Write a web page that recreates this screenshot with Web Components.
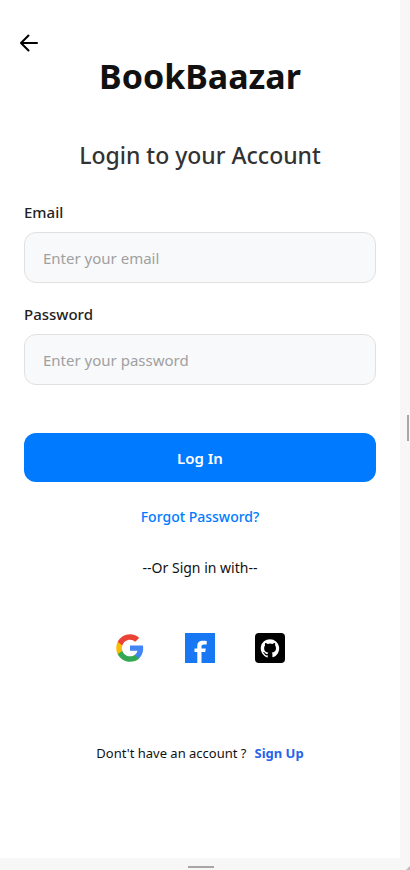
<!DOCTYPE html>
<html lang="en">
<head>
<meta charset="utf-8">
<meta name="viewport" content="width=device-width, initial-scale=1">
<title>BookBaazar - Login</title>
<style>
  body { margin: 0; background: #f7f7f7; color: #111; font-family: "Segoe UI", "Noto Sans", "Open Sans", sans-serif; }
</style>
</head>
<body>
<device-frame>
  <login-screen></login-screen>
</device-frame>
<script>
  class BaseElement extends HTMLElement {
    constructor() {
      super();
      this.attachShadow({ mode: 'open' }).innerHTML = this.render();
    }
  }

  customElements.define('device-frame', class extends BaseElement {
    render() {
      return `<style>
        :host { display: grid; grid-template: 1fr 12px / 1fr 10px; min-height: 100vh; background: #f7f7f7; }
        .screen { background: #fff; min-width: 0; }
        .bar { display: flex; align-items: center; justify-content: center; }
        .right { justify-content: end; padding: 0 1px 2px 0; }
        .bottom { align-items: end; padding: 0 0 2px 2px; }
        .bar i { background: #aaa6a6; }
        .right i { width: 2px; height: 26px; }
        .bottom i { width: 26px; height: 2px; }
        svg { align-self: end; justify-self: end; display: block; }
      </style>
      <main class="screen"><slot></slot></main>
      <div class="bar right"><i></i></div>
      <div class="bar bottom"><i></i></div>
      <svg width="4" height="4" viewBox="0 0 4 4"><path d="M0 4 4 0V4Z" fill="#bbb"/></svg>`;
    }
  });

  customElements.define('back-button', class extends BaseElement {
    render() {
      return `<style>
        :host { display: block; }
        button { display: block; width: 24px; height: 24px; padding: 0; border: 0; background: none; color: #000; cursor: pointer; }
        svg { display: block; }
      </style>
      <button type="button" aria-label="Back"><svg width="24" height="24" viewBox="0 0 24 24" fill="none" stroke="currentColor" stroke-width="2" stroke-linecap="round" stroke-linejoin="round"><path d="M20 12H4M11.500 4.500 4 12l7.500 7.500"/></svg></button>`;
    }
  });

  customElements.define('text-field', class extends BaseElement {
    render() {
      const type = this.getAttribute('type');
      return `<style>
        :host { display: grid; gap: 10px; }
        label { font-size: 15px; line-height: 20px; font-weight: 500; color: #222; }
        input { box-sizing: border-box; width: 100%; height: 51px; margin: 0; padding: 0 18px; border: 1px solid #e0e0e0; border-radius: 12px; background: #f8f9fb; color: #333; font: inherit; font-size: 15px; outline: none; }
        input::placeholder { color: #a0a0a0; opacity: 1; }
      </style>
      <label for="field">${this.getAttribute('label')}</label>
      <input id="field" type="${type}" placeholder="${this.getAttribute('placeholder')}">`;
    }
  });

  customElements.define('primary-button', class extends BaseElement {
    render() {
      return `<style>
        :host { display: block; }
        button { display: block; width: 100%; height: 49px; padding: 0; border: 0; border-radius: 12px; background: #007bff; color: #fff; font: inherit; font-size: 15px; font-weight: 600; cursor: pointer; }
      </style>
      <button type="submit"><slot></slot></button>`;
    }
  });

  const logos = {
    Google: `<svg viewBox="0 0 48 48">
      <path fill="#4285f4" d="M45.100 24.500c0-1.600-.100-3.100-.400-4.500H24v8.500h11.900c-.500 2.700-2.100 5-4.400 6.600v5.500h7.100c4.100-3.800 6.500-9.400 6.500-16.100Z"/>
      <path fill="#34a853" d="M24 46c5.900 0 10.900-2 14.600-5.300l-7.100-5.500c-2 1.300-4.500 2.100-7.500 2.100-5.700 0-10.600-3.900-12.300-9.100H4.300v5.700C8 41.100 15.400 46 24 46Z"/>
      <path fill="#fbbc05" d="M11.700 28.200c-.400-1.300-.700-2.700-.700-4.200s.200-2.900.700-4.200v-5.700H4.300C2.800 17.100 2 20.500 2 24s.800 6.900 2.300 9.900l7.400-5.700Z"/>
      <path fill="#ea4335" d="M24 10.800c3.200 0 6.100 1.100 8.400 3.300l6.300-6.300C34.900 4.200 29.900 2 24 2 15.400 2 8 6.900 4.300 14.100l7.400 5.700c1.700-5.200 6.600-9 12.300-9Z"/></svg>`,
    Facebook: `<svg viewBox="0 0 30 30"><path fill="#1877f2" d="M0 0h30v30H0z"/>
      <path fill="#fff" d="M12.300 30V18.900H9.500v-3.500h2.800v-2.500c0-3.300 2-5.200 5.600-5.200 1.600 0 2.900.200 3.800.400v3.300h-2.600c-1.900 0-2.600.900-2.600 2.200v1.800h4.300l-.600 3.500h-3.700V30Z"/></svg>`,
    GitHub: `<svg viewBox="0 0 30 30"><rect width="30" height="30" rx="4"/>
      <path fill="#fff" transform="translate(5.700 5.900) scale(.78)" d="M12 .3a12 12 0 0 0-3.800 23.400c.6.100.8-.3.800-.6v-2.100c-3.300.7-4-1.600-4-1.600-.6-1.400-1.400-1.800-1.400-1.800-1-.7.100-.7.100-.7 1.200.1 1.900 1.200 1.900 1.200 1 1.800 2.800 1.300 3.500 1 .1-.8.400-1.300.7-1.600-2.600-.3-5.400-1.300-5.400-5.900 0-1.300.4-2.400 1.200-3.200-.1-.3-.5-1.500.1-3.200 0 0 1-.3 3.300 1.200a11.500 11.500 0 0 1 6 0c2.300-1.500 3.300-1.200 3.300-1.200.6 1.700.2 2.900.1 3.200.8.800 1.200 1.900 1.200 3.200 0 4.600-2.800 5.600-5.400 5.900.4.400.8 1.100.8 2.200v3.300c0 .3.200.7.800.6A12 12 0 0 0 12 .3Z"/></svg>`
  };

  customElements.define('social-button', class extends BaseElement {
    render() {
      const name = this.getAttribute('provider');
      return `<style>
        :host { display: block; }
        button { display: block; padding: 0; border: 0; background: none; cursor: pointer; }
        svg { display: block; width: 30px; height: 30px; }
      </style>
      <button type="button" aria-label="Sign in with ${name}">${logos[name]}</button>`;
    }
  });

  customElements.define('login-screen', class extends BaseElement {
    render() {
      return `<style>
        :host { display: block; padding-bottom: 24px; }
        header { padding: 31px 17px 0; }
        .body { padding: 0 24px; text-align: center; }
        h1, h2, p, form { margin: 0; }
        h1 { font-size: 34px; line-height: 42px; font-weight: 700; color: #111; }
        h2 { margin-top: 41px; font-size: 23px; line-height: 34px; font-weight: 500; color: #333; }
        form { margin-top: 30px; text-align: left; }
        text-field + text-field { margin-top: 21px; }
        primary-button { margin-top: 48px; }
        a { text-decoration: none; }
        .forgot { margin-top: 24px; font-size: 14px; line-height: 22px; font-weight: 500; }
        .forgot a { color: #007bff; }
        .or { margin-top: 30px; font-size: 14px; line-height: 20px; }
        .social { display: flex; justify-content: center; gap: 40px; margin-top: 55px; }
        .signup { display: flex; justify-content: center; gap: 8px; margin-top: 80px; font-size: 13px; line-height: 20px; }
        .signup a { color: #2563eb; font-weight: 700; }
      </style>
      <header><back-button></back-button></header>
      <div class="body">
        <h1>BookBaazar</h1>
        <h2>Login to your Account</h2>
        <form>
          <text-field label="Email" type="email" placeholder="Enter your email"></text-field>
          <text-field label="Password" type="password" placeholder="Enter your password"></text-field>
          <primary-button>Log In</primary-button>
        </form>
        <p class="forgot"><a href="#forgot">Forgot Password?</a></p>
        <p class="or">--Or Sign in with--</p>
        <div class="social">
          <social-button provider="Google"></social-button>
          <social-button provider="Facebook"></social-button>
          <social-button provider="GitHub"></social-button>
        </div>
        <p class="signup"><span>Dont't have an account ?</span><a href="#signup">Sign Up</a></p>
      </div>`;
    }
  });
</script>
</body>
</html>
